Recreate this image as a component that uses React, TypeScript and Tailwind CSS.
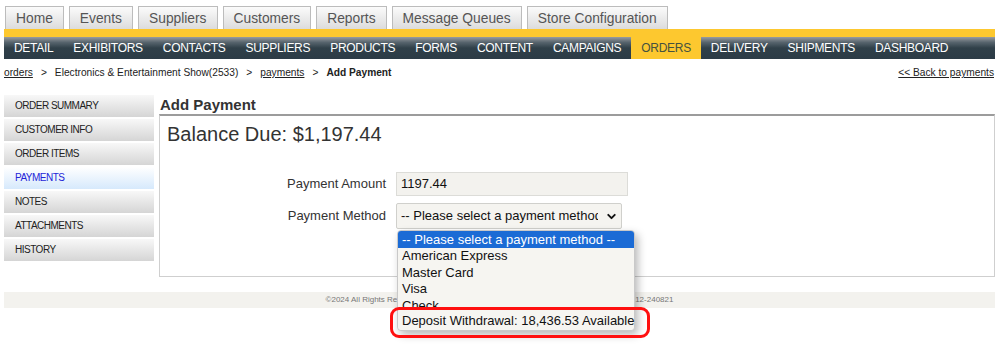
import { ChevronDown } from "lucide-react";

const tabs = ["Home", "Events", "Suppliers", "Customers", "Reports", "Message Queues", "Store Configuration"];
const navItems = ["DETAIL", "EXHIBITORS", "CONTACTS", "SUPPLIERS", "PRODUCTS", "FORMS", "CONTENT", "CAMPAIGNS", "ORDERS", "DELIVERY", "SHIPMENTS", "DASHBOARD"];
const sideItems = ["ORDER SUMMARY", "CUSTOMER INFO", "ORDER ITEMS", "PAYMENTS", "NOTES", "ATTACHMENTS", "HISTORY"];
const options = ["American Express", "Master Card", "Visa", "Check"];

const App = () => {
    return (
        <div className="relative w-[999px] h-[345px] overflow-hidden bg-white font-['Liberation_Sans',Arial,sans-serif] text-[#333]">
            <div className="ml-[4px] w-[991px]">
                {/* top tabs */}
                <div className="flex gap-[5px] pt-[6px] pl-[1px]">
                    {tabs.map((t) => (
                        <div key={t} className="h-[23px] px-[10px] border border-b-0 border-[#bcbcbc] bg-[linear-gradient(to_bottom,#fbfbfb,#dcdcdc)] text-[13.8px] leading-[23px] text-[#555]">
                            {t}
                        </div>
                    ))}
                </div>

                {/* main nav */}
                <div className="h-[30px] pt-[8px] bg-[#fdc82f]">
                    <div className="flex h-[22px] bg-[linear-gradient(to_bottom,#989ca0_0%,#56636c_25%,#304049_50%,#2c3b46_100%)]">
                        {navItems.map((n) => (
                            <div
                                key={n}
                                className={`px-[10px] text-[12px] tracking-[-0.3px] leading-[22px] ${n === "ORDERS" ? "bg-[#fdc82f] text-[#45513f]" : "text-white"}`}
                            >
                                {n}
                            </div>
                        ))}
                    </div>
                </div>

                {/* breadcrumb */}
                <div className="mt-[7px] flex items-center justify-between h-[14px] text-[10.2px] leading-[14px] text-[#222]">
                    <div className="flex items-center">
                        <span className="underline">orders</span>
                        <span className="mx-[8px]">&gt;</span>
                        <span>Electronics &amp; Entertainment Show(2533)</span>
                        <span className="mx-[8px]">&gt;</span>
                        <span className="underline">payments</span>
                        <span className="mx-[8px]">&gt;</span>
                        <span className="font-bold">Add Payment</span>
                    </div>
                    <span className="underline pr-[1px]">&lt;&lt; Back to payments</span>
                </div>

                {/* body */}
                <div className="mt-[15px] flex gap-[5px]">
                    <div className="w-[150px] flex flex-col gap-[2px]">
                        {sideItems.map((s) => (
                            <div
                                key={s}
                                className={`h-[22px] pl-[11px] text-[10px] tracking-[-0.5px] leading-[22px] ${s === "PAYMENTS" ? "bg-[linear-gradient(to_bottom,#ffffff,#d6e9fc)] text-[#2424d8]" : "bg-[linear-gradient(to_bottom,#f8f8f8,#d5d5d5)] text-[#222]"}`}
                            >
                                {s}
                            </div>
                        ))}
                    </div>

                    <div className="flex-1">
                        <h2 className="pl-[1px] text-[15px] font-bold leading-[19px] text-[#333]">Add Payment</h2>
                        <div className="h-[163px] border border-t-2 border-[#cfcfcf] border-t-[#9c9c9c] pl-[7px] pt-[7px]">
                            <div className="text-[20px] leading-[23px] text-[#333]">Balance Due: $1,197.44</div>

                            <div className="mt-[26px] flex flex-col gap-[7px] -ml-[7px]">
                                <div className="flex items-center gap-[10px]">
                                    <div className="w-[226px] text-right text-[13px] text-[#333]">Payment Amount</div>
                                    <div className="w-[232px] h-[24px] border border-[#dcdcd8] bg-[#f3f2ee] px-[4px] text-[13px] leading-[22px] text-[#111]">
                                        1197.44
                                    </div>
                                </div>
                                <div className="flex items-center gap-[10px]">
                                    <div className="w-[226px] text-right text-[13px] text-[#333]">Payment Method</div>
                                    <div className="w-[226px] h-[26px] flex items-center border border-[#d0d0cc] rounded-[2px] bg-[#f5f4f0] pl-[4px] pr-[3px]">
                                        <div className="w-[197px] overflow-hidden whitespace-nowrap text-[13px] text-[#111]">
                                            -- Please select a payment method --
                                        </div>
                                        <ChevronDown className="ml-auto w-[13px] h-[13px] text-[#111]" strokeWidth={3.5} />
                                    </div>
                                </div>
                            </div>
                        </div>
                    </div>
                </div>

                {/* footer */}
                <div className="mt-[15px] h-[16px] bg-[#f3f2ee] text-center text-[8px] leading-[16px] text-[#777]">
                    ©2024 All Rights Reserved. Event Management System &nbsp;|&nbsp; Terms of Use &nbsp;|&nbsp; Version 5.0.12-240821
                </div>
            </div>

            {/* open select list */}
            <div className="absolute left-[397px] top-[230px] w-[238px] rounded-[4px] border border-[#c9c9c9] bg-[#f6f5f1] shadow-[3px_4px_8px_rgba(0,0,0,0.28)] text-[13px] text-[#111]">
                <div className="h-[17px] rounded-t-[3px] bg-[#1b6bd5] px-[4px] leading-[17px] text-white whitespace-nowrap overflow-hidden">
                    -- Please select a payment method --
                </div>
                {options.map((o) => (
                    <div key={o} className="h-[16.5px] px-[4px] leading-[16.5px]">
                        {o}
                    </div>
                ))}
                <div className="relative -mt-[2px] h-[18px] rounded-b-[4px] bg-[#f6f5f1] px-[4px] leading-[18px] whitespace-nowrap">
                    Deposit Withdrawal: 18,436.53 Available
                </div>
            </div>

            {/* highlight */}
            <div className="absolute left-[390px] top-[307px] w-[260px] h-[31px] rounded-[9px] border-[3px] border-[#ff1010]" />
        </div>
    );
};

export default App;
